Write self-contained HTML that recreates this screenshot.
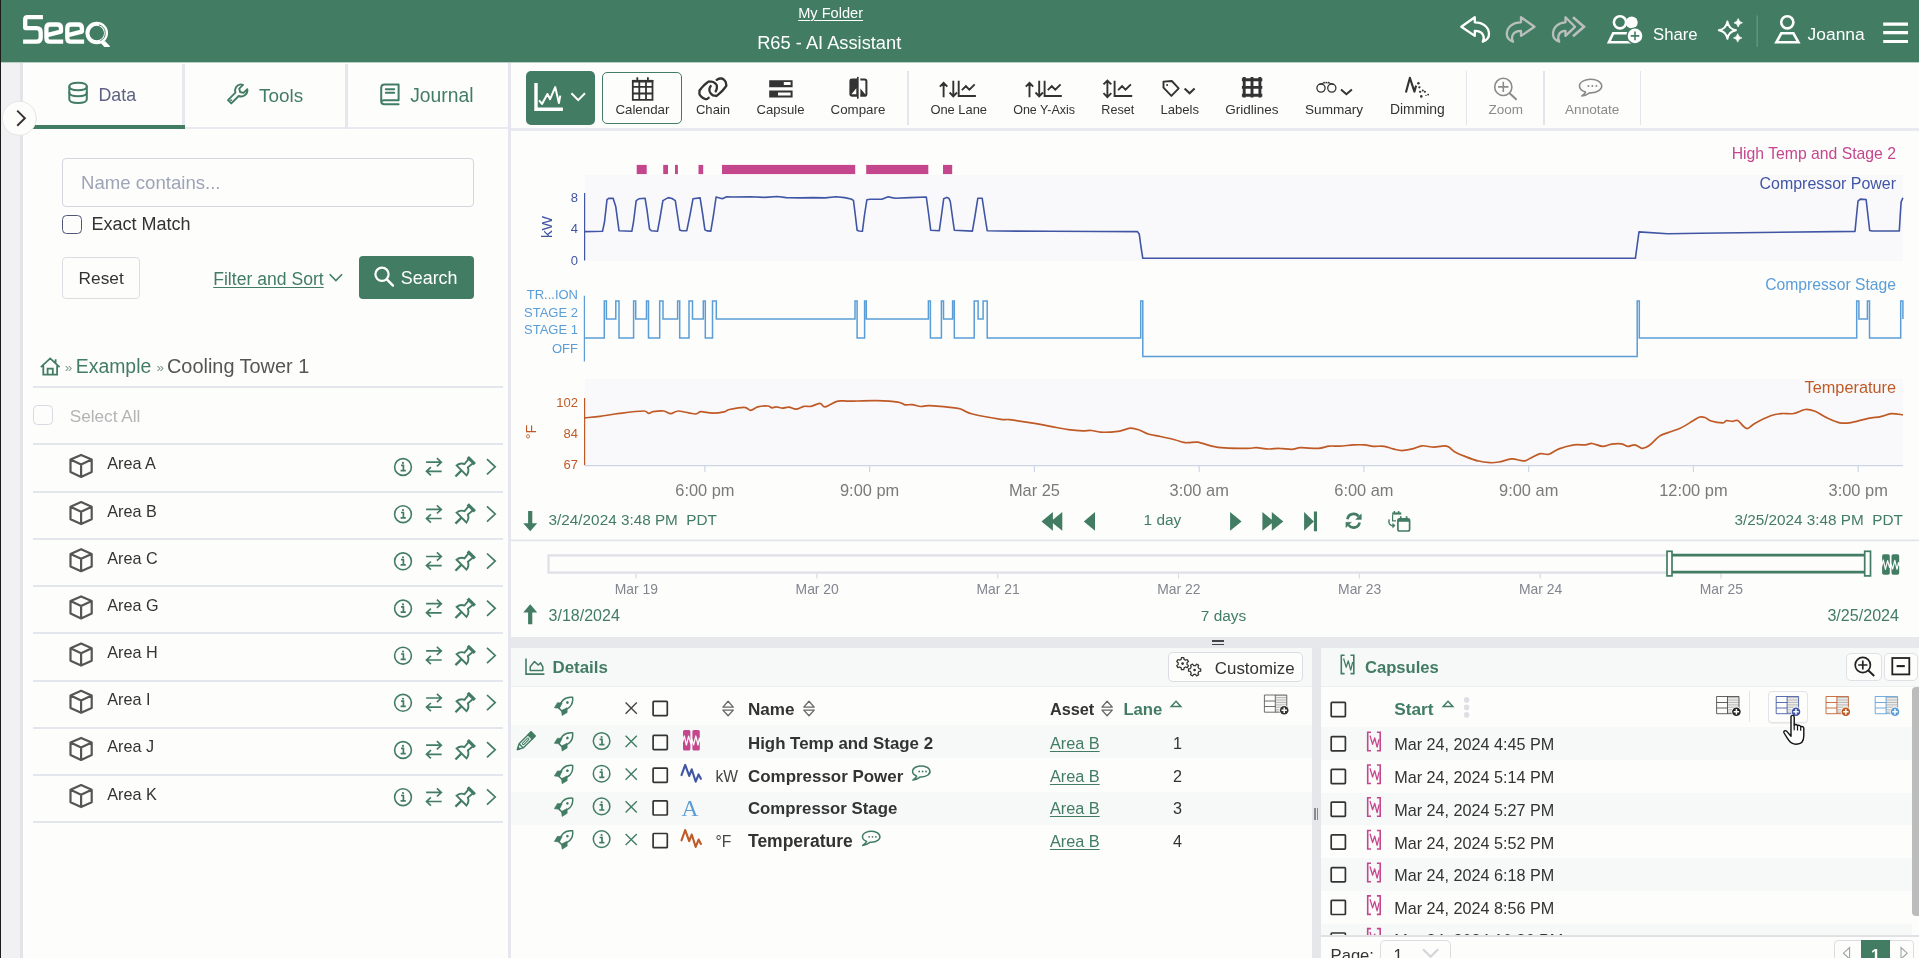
<!DOCTYPE html>
<html><head><meta charset="utf-8"><title>Seeq</title>
<style>
*{box-sizing:border-box;margin:0;padding:0}
html,body{width:1919px;height:958px;overflow:hidden;background:#fdfdfc;font-family:"Liberation Sans",sans-serif;color:#333}
.a{position:absolute}
.t{position:absolute;white-space:nowrap;line-height:1}
.g{color:#427c63}
svg{position:absolute;overflow:visible}
#root{position:absolute;left:0;top:0;width:1919px;height:958px;overflow:hidden;will-change:transform}
</style></head><body><div id="root">
<!-- HEADER -->
<div class="a" style="left:0;top:0;width:1919px;height:62px;background:#427d63"></div>
<div class="a" style="left:0;top:0;width:1px;height:958px;background:#1c1c1c"></div>
<svg style="left:0;top:0" width="1919" height="62" viewBox="0 0 1919 62" fill="none" stroke="#fff" stroke-linejoin="round">
 <!-- logo -->
 <g stroke-width="4.3" stroke-linecap="butt" stroke-linejoin="round">
  <path d="M42.9,17.2 H27.5 Q25.2,17.2 25.2,19.5 V28.1 H36.5 Q40.7,28.1 40.7,32.3 V37.5 Q40.7,41.7 36.5,41.7 H23.1"/>
  <path d="M63.2,41.7 H50 Q46.4,41.7 46.4,38 V28.2 Q46.4,24.5 50,24.5 H57.4 Q61,24.5 61,28.2 V31.6 L47,35.2"/>
  <path d="M84.1,41.7 H70.9 Q67.3,41.7 67.3,38 V28.2 Q67.3,24.5 70.9,24.5 H78.3 Q81.9,24.5 81.9,28.2 V31.6 L67.9,35.2"/>
  <circle cx="96.75" cy="33.05" r="9.3" stroke-width="4"/>
 </g>
 <path d="M100.7,42.9 L105,40.9 L109.8,46.1 V46.9 H104.4 Z" fill="#fff" stroke="none"/>
 <path d="M98.9,24.9 A8.4,8.4 0 0 1 100.3,40.7" stroke="#427d63" stroke-width=".9" fill="none"/>
 <!-- undo -->
 <path d="M1461.3,26.8 L1474.8,17.2 V22.3 C1483,22.3 1489,27 1489,34 C1489,38 1486,40.6 1482.8,41.6 C1484.6,38.5 1484.6,31 1474.8,30.9 V35.9 Z" stroke-width="2.3"/>
 <!-- redo (dim) -->
 <g stroke="#b9bfbc" stroke-width="2.3">
 <path d="M1534.5,26.8 L1521,17.2 V22.3 C1512.8,22.3 1506.8,27 1506.8,34 C1506.8,38 1509.8,40.6 1513,41.6 C1511.2,38.5 1511.2,31 1521,30.9 V35.9 Z"/>
 <path d="M1575,26.8 L1565.5,17.2 V22.3 C1558.8,22.3 1553,27 1553,34 C1553,38 1556,40.6 1559.2,41.6 C1557.4,38.5 1557.4,31 1565.5,30.9 V35.9 Z"/>
 <path d="M1573,17.3 L1584,26.8 L1573,36.3" stroke-width="2.6" stroke-linejoin="miter"/>
 </g>
 <!-- share icon -->
 <circle cx="1631.7" cy="22.4" r="6" fill="#fff" stroke="none"/>
 <circle cx="1620" cy="22.3" r="6.1" stroke-width="2.6" fill="#427d63"/>
 <path d="M1613.2,33.2 H1628 L1632,42.2 H1608.9 Z" stroke-width="2.6" stroke-linejoin="miter"/>
 <circle cx="1635" cy="35.9" r="8.6" fill="#427d63" stroke="none"/>
 <circle cx="1635" cy="35.9" r="7.3" fill="#fff" stroke="none"/>
 <path d="M1635,31.6 V40.2 M1630.7,35.9 H1639.3" stroke="#427d63" stroke-width="1.6"/>
 <!-- sparkles -->
 <path d="M1727.4,21.6 Q1728.6,29 1736,30.2 Q1728.6,31.4 1727.4,38.8 Q1726.2,31.4 1718.8,30.2 Q1726.2,29 1727.4,21.6Z" stroke-width="2"/>
 <path d="M1738.2,18.6 Q1738.8,22.2 1742.4,22.8 Q1738.8,23.4 1738.2,27 Q1737.6,23.4 1734,22.8 Q1737.6,22.2 1738.2,18.6Z M1737.7,33.7 Q1738.3,37.3 1741.9,37.9 Q1738.3,38.5 1737.7,42.1 Q1737.1,38.5 1733.5,37.9 Q1737.1,37.3 1737.7,33.7Z" fill="#fff" stroke="#fff" stroke-width=".8"/>
 <path d="M1757.2,15.5 V46.8" stroke="#6a9a84" stroke-width="1.2"/>
 <!-- user -->
 <circle cx="1787.3" cy="22.3" r="6.1" stroke-width="2.6"/>
 <path d="M1781.3,33.3 H1793.4 L1798.4,42.2 H1776.4 Z" stroke-width="2.6" stroke-linejoin="miter"/>
 <!-- hamburger -->
 <path d="M1883.2,24.1 H1908 M1883.2,32.6 H1908 M1883.2,41.5 H1908" stroke-width="3.2"/>
</svg>
<div class="t" style="top:5px;font-size:14.6px;line-height:16px;color:#fff;left:798.2px;text-decoration:underline;text-underline-offset:1.5px;text-decoration-thickness:1.3px">My Folder</div>
<div class="t" style="top:32px;font-size:18.25px;line-height:21px;color:#fff;left:757.2px;">R65 - AI Assistant</div>
<div class="t" style="top:25px;font-size:16.7px;line-height:19px;color:#fff;left:1653.0px;">Share</div>
<div class="t" style="top:24px;font-size:17.4px;line-height:20px;color:#fff;left:1807.6px;">Joanna</div>
<!-- LEFT PANEL -->
<div class="a" style="left:1px;top:62px;width:18.5px;height:896px;background:#f1f1f4"></div>
<div class="a" style="left:19.5px;top:62px;width:3px;height:896px;background:#e2e2e9"></div>
<div class="a" style="left:507.7px;top:62px;width:3.3px;height:896px;background:#e6e7ee"></div>
<div class="a" style="left:22.5px;top:127.3px;width:485.2px;height:2px;background:#e9e9f0"></div>
<div class="a" style="left:182.4px;top:64px;width:2.6px;height:64.5px;background:#e6e7ef"></div>
<div class="a" style="left:345.3px;top:64px;width:2.6px;height:64.5px;background:#e6e7ef"></div>
<div class="a" style="left:22.5px;top:125px;width:162px;height:3.8px;background:#427d63"></div>
<div class="t" style="top:85px;font-size:17.8px;line-height:20px;color:#5d6182;left:98.5px;">Data</div>
<div class="t" style="top:85px;font-size:18.9px;line-height:21px;color:#427d63;left:259.0px;">Tools</div>
<div class="t" style="top:85px;font-size:19.3px;line-height:21px;color:#427d63;left:410.2px;">Journal</div>
<svg style="left:0;top:62px" width="512" height="80" viewBox="0 62 512 80" fill="none" stroke="#427d63" stroke-width="2" stroke-linejoin="round" stroke-linecap="round">
 <path d="M69.3,86.6 C69.3,81.6 86.8,81.6 86.8,86.6 V99.2 C86.8,104.2 69.3,104.2 69.3,99.2 Z"/>
 <path d="M69.3,86.6 C69.3,91.6 86.8,91.6 86.8,86.6 M69.3,92.4 C69.3,97.4 86.8,97.4 86.8,92.4"/>
 <!-- wrench -->
 <path d="M240.6,84.4 a6.3,6.3 0 0 0 -5.2,8.3 L228,100.1 l3.3,3.3 L238.7,96 a6.3,6.3 0 0 0 8.6,-6.9 l-3.8,3.8 l-3.4,-0.9 l-0.9,-3.4 l3.8,-3.8 a6.3,6.3 0 0 0 -2.4,-0.4 Z" stroke-width="1.9"/>
 <circle cx="231" cy="100.2" r=".6" stroke-width="1"/>
 <!-- journal -->
 <path d="M398.6,100.2 V84.4 H384.6 Q381.2,84.4 381.2,87.8 V101.2 Q381.2,104.2 384.4,104.2 H398.6 M398.6,100.2 H384.4 Q381.4,100.2 381.3,102 M385.8,89.3 H394.2 M385.8,92.7 H394.2" stroke-width="2"/>
 <!-- collapse -->
 <circle cx="19.3" cy="118.3" r="17" fill="#fdfdfc" stroke="#e4e4e6" stroke-width="1"/>
 <path d="M17.2,110.6 L24.9,118.2 L17.2,125.7" stroke="#3a2f33" stroke-width="1.9" stroke-linejoin="miter" stroke-linecap="butt"/>
</svg>
<div class="a" style="left:62px;top:158px;width:412px;height:48.5px;border:1px solid #d3d5df;border-radius:4px;background:#fdfdfc"></div>
<div class="t" style="top:172px;font-size:18.6px;line-height:21px;color:#9ea4b8;left:81.0px;">Name contains...</div>
<div class="a" style="left:62px;top:214.5px;width:19.5px;height:19.5px;border:1.5px solid #50567a;border-radius:4.5px;background:#fdfdfc"></div>
<div class="t" style="top:214px;font-size:18px;line-height:20px;color:#333;left:91.5px;">Exact Match</div>
<div class="a" style="left:62px;top:256.5px;width:78px;height:42px;border:1px solid #dcdde3;border-radius:4px;background:#fdfdfc"></div>
<div class="t" style="top:268px;font-size:17.3px;line-height:20px;color:#333;left:78.6px;">Reset</div>
<div class="t" style="top:269px;font-size:17.6px;line-height:20px;color:#427d63;left:213.2px;text-decoration:underline;text-underline-offset:2px">Filter and Sort</div>
<div class="a" style="left:358.8px;top:256.2px;width:115.3px;height:42.8px;background:#427d63;border-radius:4px"></div>
<div class="t" style="top:268px;font-size:17.9px;line-height:20px;color:#fff;left:400.8px;">Search</div>
<svg style="left:0;top:250px" width="512" height="60" viewBox="0 250 512 60" fill="none" stroke-linecap="round">
 <circle cx="382" cy="274.3" r="6.6" stroke="#fff" stroke-width="2.2"/>
 <path d="M386.9,279.3 L393,285.6" stroke="#fff" stroke-width="2.4"/>
 <path d="M329.7,274.3 L335.9,280.6 L342.1,274.3" stroke="#427d63" stroke-width="1.6" stroke-linecap="butt"/>
</svg>
<svg style="left:0;top:350px" width="512" height="40" viewBox="0 350 512 40" fill="none" stroke="#427d63" stroke-width="1.8" stroke-linejoin="miter">
 <path d="M40.8,367.2 L50.2,358.4 L59.6,367.2 M43.3,365.6 V374.6 H57.1 V365.6 M47.6,374.6 V368.6 H52.8 V374.6 M55.6,363 V359.3"/>
</svg>
<div class="t" style="top:360px;font-size:13.5px;line-height:15px;color:#7a9a8b;left:64.8px;">»</div>
<div class="t" style="top:355px;font-size:19.4px;line-height:22px;color:#427d63;left:75.8px;">Example</div>
<div class="t" style="top:360px;font-size:13.5px;line-height:15px;color:#7a9a8b;left:156.6px;">»</div>
<div class="t" style="top:355px;font-size:19.9px;line-height:22px;color:#555;left:167.0px;">Cooling Tower 1</div>
<div class="a" style="left:33px;top:386px;width:470px;height:2px;background:#e4e6ed"></div>
<div class="a" style="left:33.4px;top:405.3px;width:19.4px;height:19.4px;border:1px solid #d6d8e2;border-radius:4.5px;background:#fdfdfc"></div>
<div class="t" style="top:406px;font-size:17.2px;line-height:20px;color:#b4b4b6;left:69.7px;">Select All</div>
<div class="a" style="left:33px;top:443.2px;width:470px;height:2px;background:#e4e6ed"></div>
<svg width="0" height="0" style="position:absolute"><defs>
<g id="cube" fill="none" stroke="#555" stroke-width="2.2" stroke-linejoin="round"><path d="M0,-11 L10.6,-6.3 V6.2 L0,11 L-10.6,6.2 V-6.3 Z M-10.6,-6.3 L0,-1.4 L10.6,-6.3 M0,-1.4 V11"/></g>
<g id="info" fill="none" stroke="#427d63"><circle cx="0" cy="0" r="8.4" stroke-width="1.6"/><path d="M-2,-1.7 H0.4 V3.4 M-2.4,3.6 H2.8" stroke-width="1.7"/><circle cx="0" cy="-4.1" r="1.05" fill="#427d63" stroke="none"/></g>
<g id="swap" fill="none" stroke="#427d63" stroke-width="1.7"><path d="M-7.8,-4.6 H7.4 M3,-8.7 L7.4,-4.6 L3,-0.5 M7.8,4.5 H-7.4 M-3,0.4 L-7.4,4.5 L-3,8.6"/></g>
<g id="pin" fill="none" stroke="#427d63" stroke-width="1.9" stroke-linejoin="miter"><g transform="rotate(45)"><path d="M-5,-10.6 H5" stroke-width="3.2"/><path d="M-3,-10 L-2.4,-3.4 Q-6.6,-1.4 -7,3.2 H7 Q6.6,-1.4 2.4,-3.4 L3,-10"/><path d="M0,3.2 V11.8" stroke-width="2.3"/></g></g>
<g id="chev" fill="none" stroke="#427d63" stroke-width="1.7"><path d="M-4.1,-7.6 L4.1,0 L-4.1,7.6"/></g>
</defs></svg>
<svg style="left:0;top:440px" width="512" height="400" viewBox="0 440 512 400">
<use href="#cube" x="81.1" y="465.9"/><use href="#info" x="403" y="467.0"/><use href="#swap" x="433.9" y="466.8"/><use href="#pin" x="463.8" y="468.1"/><use href="#chev" x="491.1" y="466.8"/>
<use href="#cube" x="81.1" y="513.1"/><use href="#info" x="403" y="514.2"/><use href="#swap" x="433.9" y="514.0"/><use href="#pin" x="463.8" y="515.3"/><use href="#chev" x="491.1" y="514.0"/>
<use href="#cube" x="81.1" y="560.2"/><use href="#info" x="403" y="561.3"/><use href="#swap" x="433.9" y="561.1"/><use href="#pin" x="463.8" y="562.4"/><use href="#chev" x="491.1" y="561.1"/>
<use href="#cube" x="81.1" y="607.4"/><use href="#info" x="403" y="608.5"/><use href="#swap" x="433.9" y="608.3"/><use href="#pin" x="463.8" y="609.6"/><use href="#chev" x="491.1" y="608.3"/>
<use href="#cube" x="81.1" y="654.6"/><use href="#info" x="403" y="655.7"/><use href="#swap" x="433.9" y="655.5"/><use href="#pin" x="463.8" y="656.8"/><use href="#chev" x="491.1" y="655.5"/>
<use href="#cube" x="81.1" y="701.8"/><use href="#info" x="403" y="702.8"/><use href="#swap" x="433.9" y="702.6"/><use href="#pin" x="463.8" y="703.9"/><use href="#chev" x="491.1" y="702.6"/>
<use href="#cube" x="81.1" y="748.9"/><use href="#info" x="403" y="750.0"/><use href="#swap" x="433.9" y="749.8"/><use href="#pin" x="463.8" y="751.1"/><use href="#chev" x="491.1" y="749.8"/>
<use href="#cube" x="81.1" y="796.1"/><use href="#info" x="403" y="797.2"/><use href="#swap" x="433.9" y="797.0"/><use href="#pin" x="463.8" y="798.3"/><use href="#chev" x="491.1" y="797.0"/>
</svg>
<div class="t" style="top:454px;font-size:16.2px;line-height:18px;color:#333;left:107.3px;">Area A</div>
<div class="a" style="left:33px;top:490.9px;width:470px;height:2px;background:#e4e6ed"></div>
<div class="t" style="top:502px;font-size:16.2px;line-height:18px;color:#333;left:107.3px;">Area B</div>
<div class="a" style="left:33px;top:538.0px;width:470px;height:2px;background:#e4e6ed"></div>
<div class="t" style="top:549px;font-size:16.2px;line-height:18px;color:#333;left:107.3px;">Area C</div>
<div class="a" style="left:33px;top:585.2px;width:470px;height:2px;background:#e4e6ed"></div>
<div class="t" style="top:596px;font-size:16.2px;line-height:18px;color:#333;left:107.3px;">Area G</div>
<div class="a" style="left:33px;top:632.4px;width:470px;height:2px;background:#e4e6ed"></div>
<div class="t" style="top:643px;font-size:16.2px;line-height:18px;color:#333;left:107.3px;">Area H</div>
<div class="a" style="left:33px;top:679.5px;width:470px;height:2px;background:#e4e6ed"></div>
<div class="t" style="top:690px;font-size:16.2px;line-height:18px;color:#333;left:107.3px;">Area I</div>
<div class="a" style="left:33px;top:726.7px;width:470px;height:2px;background:#e4e6ed"></div>
<div class="t" style="top:737px;font-size:16.2px;line-height:18px;color:#333;left:107.3px;">Area J</div>
<div class="a" style="left:33px;top:773.9px;width:470px;height:2px;background:#e4e6ed"></div>
<div class="t" style="top:785px;font-size:16.2px;line-height:18px;color:#333;left:107.3px;">Area K</div>
<div class="a" style="left:33px;top:821.1px;width:470px;height:2px;background:#e4e6ed"></div>
<!-- TOOLBAR -->
<div class="a" style="left:511px;top:128.2px;width:1408px;height:2.8px;background:#e9eaf0"></div>
<div class="a" style="left:526px;top:71px;width:69px;height:53.8px;background:#427d63;border-radius:5px"></div>
<div class="a" style="left:602px;top:72px;width:80.3px;height:51.8px;border:1.3px solid #427d63;border-radius:5px;background:#fdfdfc"></div>
<div class="a" style="left:907.0999999999999px;top:71px;width:1.5px;height:54px;background:#e4e5ed"></div>
<div class="a" style="left:1465.8px;top:71px;width:1.5px;height:54px;background:#e4e5ed"></div>
<div class="a" style="left:1543.3px;top:71px;width:1.5px;height:54px;background:#e4e5ed"></div>
<div class="a" style="left:1639.8999999999999px;top:71px;width:1.5px;height:54px;background:#e4e5ed"></div>
<div class="t" style="top:102px;font-size:13.3px;line-height:15px;color:#333;left:615.4px;">Calendar</div>
<div class="t" style="top:102px;font-size:13.1px;line-height:15px;color:#333;left:695.9px;">Chain</div>
<div class="t" style="top:102px;font-size:13.1px;line-height:15px;color:#333;left:756.5px;">Capsule</div>
<div class="t" style="top:102px;font-size:13.3px;line-height:15px;color:#333;left:830.6px;">Compare</div>
<div class="t" style="top:102px;font-size:12.9px;line-height:15px;color:#333;left:930.4px;">One Lane</div>
<div class="t" style="top:103px;font-size:12.5px;line-height:14px;color:#333;left:1013.2px;">One Y-Axis</div>
<div class="t" style="top:103px;font-size:12.6px;line-height:14px;color:#333;left:1101.3px;">Reset</div>
<div class="t" style="top:102px;font-size:13.1px;line-height:15px;color:#333;left:1160.4px;">Labels</div>
<div class="t" style="top:102px;font-size:13.5px;line-height:15px;color:#333;left:1225.2px;">Gridlines</div>
<div class="t" style="top:102px;font-size:13.6px;line-height:15px;color:#333;left:1305.0px;">Summary</div>
<div class="t" style="top:101px;font-size:13.9px;line-height:16px;color:#333;left:1390.0px;">Dimming</div>
<div class="t" style="top:102px;font-size:13.5px;line-height:15px;color:#8b8b8b;left:1488.4px;">Zoom</div>
<div class="t" style="top:102px;font-size:13.6px;line-height:15px;color:#8b8b8b;left:1565.0px;">Annotate</div>
<svg style="left:0;top:62px" width="1919" height="70" viewBox="0 62 1919 70" fill="none" stroke="#333" stroke-width="1.9">
 <!-- chart btn -->
 <path d="M536,82.9 V109.2 H562.9" stroke="#fff" stroke-width="3.4"/>
 <path d="M539.1,100.3 L542,103.9 L547.4,94 L550.1,99.2 L555.2,87.1 L558.9,103 L560.3,95.6" stroke="#fff" stroke-width="2" stroke-linejoin="round"/>
 <path d="M571.4,93.3 L578.2,100.1 L585,93.3" stroke="#fff" stroke-width="2"/>
 <!-- calendar -->
 <path d="M632.8,81 H652.5 V99.9 H632.8 Z M632.8,86.9 H652.5 M632.8,93.5 H652.5 M639.3,81 V99.9 M646,81 V99.9 M637.3,77.3 V81 M647.9,77.3 V81" stroke-width="1.8"/>
 <path d="M632,81.2 H653.3" stroke-width="2.6"/>
 <!-- chain -->
 <path d="M708.7,97.7 C707.6,98.2 708.1,99.6 705.4,99.1 C702.7,98.6 702.7,98.5 700.7,96.1 C698.7,93.7 699.4,94.5 699.5,92.0 C699.6,89.5 698.6,91.7 701.0,88.7 C703.4,85.7 703.5,85.3 706.7,83.0 C709.9,80.7 707.9,81.6 710.7,81.7 C713.5,81.8 713.0,81.6 715.1,83.4 C717.2,85.2 716.7,84.3 716.9,87.0 C717.1,89.7 716.1,89.9 715.7,91.4" stroke-width="2.3" stroke-linecap="round"/>
 <path d="M716.7,79.9 C717.9,79.4 717.9,78.5 720.4,78.5 C722.9,78.5 722.2,78.2 724.1,80.0 C726.0,81.8 725.9,81.3 726.1,84.0 C726.3,86.7 727.3,84.5 724.7,88.0 C722.1,91.5 721.6,91.8 718.4,94.4 C715.2,97.0 717.4,95.8 715.1,95.7 C712.8,95.6 713.3,96.0 711.4,94.1 C709.5,92.2 709.6,92.7 709.4,90.0 C709.2,87.3 710.3,87.3 710.7,86.0" stroke-width="2.3" stroke-linecap="round"/>
 <!-- capsule -->
 <path d="M769.2,80.3 H792.6 V87.2 H769.2 Z M783.8,82.1 V85 H790.6 V82.1 Z M769.2,90.6 H792.6 V97.5 H769.2 Z M778,92.6 V95.6 H790.6 V92.6 Z" fill="#333" fill-rule="evenodd" stroke="none"/>
 <!-- compare -->
 <path d="M857.3,78.6 H851.8 Q849.4,78.6 849.4,81 V94.3 Q849.4,96.7 851.8,96.7 H857.3 Z" fill="#333" stroke="none"/>
 <path d="M851.4,94.3 L856.3,88.2 V94.3 Z" fill="#fdfdfc" stroke="none"/>
 <path d="M857.8,76.9 V98.7" stroke-width="1.7"/>
 <path d="M860.3,79.6 H864.6 Q866.4,79.6 866.4,81.4 V93.9 Q866.4,95.7 864.6,95.7 H860.3" stroke-width="2"/>
 <path d="M860.4,88.5 L866,95.3 H860.4 Z" fill="#333" stroke="none"/>
 <g transform="translate(0,0)"><path d="M943.6,97.2 V82.8 M939.9,86.7 L943.6,82.8 L947.3,86.7 M953.3,80.7 V96.2 M949.6,92.5 L953.3,96.3 L957,92.5 M958.7,80.7 V96 H975.9 M961.9,90.2 L965.9,86.2 L969.4,89.6 L974.7,84.4"/></g><g transform="translate(85.9,0)"><path d="M943.6,97.2 V82.8 M939.9,86.7 L943.6,82.8 L947.3,86.7 M953.3,80.7 V96.2 M949.6,92.5 L953.3,96.3 L957,92.5 M958.7,80.7 V96 H975.9 M961.9,90.2 L965.9,86.2 L969.4,89.6 L974.7,84.4"/></g>
 <!-- reset -->
 <path d="M1107.4,80.6 V97 M1103.5,84.4 L1107.4,80.5 L1111.3,84.4 M1103.5,93.2 L1107.4,97.1 L1111.3,93.2 M1114.6,80.7 V96 H1132.2 M1118.1,90.2 L1122.1,86.2 L1125.5,89.6 L1130.9,84.4"/>
 <!-- labels -->
 <path d="M1163.5,81.6 L1171.8,81 L1178.7,88.4 L1171.4,95.9 L1163.5,87.7 Z" stroke-linejoin="round"/>
 <circle cx="1167.1" cy="84.9" r="1" fill="#333" stroke="none"/>
 <path d="M1184.6,88.5 L1189.6,93.3 L1194.6,88.5" stroke-width="2"/>
 <!-- gridlines -->
 <path d="M1244.2,77.1 V97.5 M1252,77.1 V97.5 M1259.9,77.1 V97.5 M1241.9,79.8 H1262.3 M1241.9,87.4 H1262.3 M1241.9,95.2 H1262.3" stroke-width="2.9"/>
 <!-- summary -->
 <circle cx="1321" cy="88.1" r="4.1" stroke-width="1.3"/><circle cx="1331.8" cy="88.1" r="4.1" stroke-width="1.3"/>
 <path d="M1319.5,84.2 Q1326.4,81.2 1333.3,84.2 M1322.5,83.6 L1324.5,82 M1326.4,83.3 V81.7 M1330.3,83.6 L1328.3,82" stroke-width="1.1"/>
 <path d="M1341,89.5 L1346.4,94.2 L1351.9,89.5" stroke-width="2"/>
 <!-- dimming -->
 <path d="M1405.9,92.5 L1409.9,77.8 L1414.4,91.6 L1416.1,85.6" stroke-width="2.1" stroke-linejoin="round"/>
 <g fill="#333" stroke="none"><circle cx="1418.4" cy="83.2" r="1.25"/><circle cx="1419.4" cy="87.3" r="1.15"/><circle cx="1420.1" cy="91.8" r="1.15"/><circle cx="1422.8" cy="90.4" r="1"/><circle cx="1424.9" cy="91.8" r="1.05"/><circle cx="1421.3" cy="96.4" r="1.3"/><circle cx="1428.2" cy="94.6" r=".95"/><circle cx="1426" cy="95.4" r=".7"/></g>
 <!-- zoom -->
 <g stroke="#8b8b8b"><circle cx="1503.3" cy="86.9" r="8.6" stroke-width="1.6"/><path d="M1498.1,86.9 H1508.5 M1503.3,81.7 V92.1" stroke-width="1.6"/><path d="M1509.6,93.2 L1516.6,99.7" stroke-width="2"/></g>
 <!-- annotate -->
 <g stroke="#8b8b8b" stroke-width="1.6"><path d="M1585.6,92.1 A11.1,6.8 0 1 1 1589.6,92.8 Q1586.2,95.4 1581.8,95.9 Q1584.6,94.2 1585.6,92.1 Z" stroke-linejoin="round"/></g>
 <g fill="#8b8b8b" stroke="none"><circle cx="1588.4" cy="86.1" r="1"/><circle cx="1592.4" cy="86.1" r="1"/><circle cx="1596.4" cy="86.1" r="1"/></g>
</svg>
<!-- CHART -->
<div class="a" style="left:585.3px;top:174.8px;width:1317.7px;height:86.4px;background:#f9f9fb"></div>
<div class="a" style="left:585.3px;top:378.8px;width:1317.7px;height:86.4px;background:#f9f9fb"></div>
<svg style="left:0;top:130px" width="1919" height="520" viewBox="0 130 1919 520" fill="none">
<rect x="636.7" y="164.9" width="10.0" height="9.2" fill="#c4478e"/><rect x="663.2" y="164.9" width="4.8" height="9.2" fill="#c4478e"/><rect x="675" y="164.9" width="2.9" height="9.2" fill="#c4478e"/><rect x="698.5" y="164.9" width="4.7" height="9.2" fill="#c4478e"/><rect x="722" y="164.9" width="133.2" height="9.2" fill="#c4478e"/><rect x="866.2" y="164.9" width="62.1" height="9.2" fill="#c4478e"/><rect x="943" y="164.9" width="9.2" height="9.2" fill="#c4478e"/>
<path d="M585,465.6 H1903 M704.9,465.6 V472 M869.6,465.6 V472 M1034.4,465.6 V472 M1199.2,465.6 V472 M1363.9,465.6 V472 M1528.7,465.6 V472 M1693.4,465.6 V472 M1858.2,465.6 V472" stroke="#cdd6e8" stroke-width="1.2"/>
<path d="M584.6,193 V260.6" stroke="#4055a3" stroke-width="1.2"/><path d="M584.4,295.8 V361.6" stroke="#5b9dd7" stroke-width="1.2"/><path d="M584.6,398 V465.2" stroke="#bf5a26" stroke-width="1.2"/>
<path d="M584.8,231.6 L602.5,231.3 L604.5,222.0 L607.0,199.7 L608.7,198.4 L613.2,198.4 L615.8,206.8 L619.0,230.7 L631.8,231.3 L633.5,222.0 L636.2,200.6 L638.9,198.8 L645.1,198.3 L647.0,210.0 L649.5,229.0 L651.3,230.7 L657.5,231.3 L660.0,218.0 L662.9,200.6 L668.2,197.6 L672.0,198.5 L675.3,200.6 L677.5,215.0 L679.7,229.9 L682.0,230.7 L686.8,230.7 L690.0,215.0 L693.0,198.8 L700.1,197.9 L702.5,213.0 L704.9,229.9 L707.0,230.9 L710.8,231.1 L713.5,215.0 L716.1,197.0 L718.0,197.6 L722.3,198.8 L726.7,196.7 L733.0,197.0 L750.7,196.7 L764.9,197.4 L777.3,196.5 L786.2,197.6 L800.4,197.9 L812.8,197.6 L825.2,197.9 L835.9,196.7 L844.8,197.6 L851.9,199.3 L853.5,200.6 L855.3,215.0 L857.1,230.2 L859.0,231.0 L862.4,231.3 L864.5,215.0 L866.9,199.7 L870.0,199.3 L881.9,199.3 L885.0,198.0 L888.2,196.7 L892.0,197.6 L895.3,198.3 L910.0,197.6 L926.3,197.0 L928.5,213.0 L930.7,230.2 L939.3,230.7 L941.5,215.0 L943.7,198.8 L946.7,197.4 L948.8,198.2 L950.3,201.5 L952.3,216.0 L954.3,230.2 L972.4,231.1 L975.0,216.0 L977.8,198.3 L982.2,198.3 L984.7,215.0 L987.2,230.7 L1000.0,231.0 L1050.0,231.3 L1100.0,231.5 L1137.5,231.6 L1139.3,234.3 L1141.0,247.0 L1142.8,258.3 L1635.4,258.3 L1637.2,245.0 L1639.0,231.9 L1667.7,233.7 L1700.0,233.3 L1760.0,232.5 L1855.0,231.4 L1856.5,216.0 L1858.0,201.2 L1860.3,199.1 L1866.1,199.5 L1867.9,215.0 L1869.7,230.5 L1872.0,231.0 L1899.3,231.0 L1900.2,216.0 L1901.1,202.1 L1902.9,197.7" stroke="#4055a3" stroke-width="1.6" stroke-linejoin="round"/>
<path d="M584.8,338 H604.3 V300.9 H606.4 V319 H615.8 V300.9 H619 V338 H633.6 V300.9 H635.7 V319 H646.5 V300.9 H648.5 V338 H659.7 V300.9 H663 V319 H677.6 V300.9 H679.7 V338 H689 V300.9 H692.5 V319 H703.3 V300.9 H705.3 V338 H712.5 V300.9 H716.3 V319 H855 V300.9 H857.1 V338 H864.6 V300.9 H866.3 V319 H928.4 V300.9 H930.4 V338 H941.4 V300.9 H943.5 V319 H952.6 V300.9 H954.3 V338 H974.2 V300.9 H978.1 V319 H983.1 V300.9 H987.2 V338 H1140.7 V300.9 H1142.8 V356.4 H1637.2 V300.9 H1639.3 V338 H1856.7 V300.9 H1858.9 V319 H1867.4 V300.9 H1869.5 V338 H1900.7 V300.9 H1902.9 V319" stroke="#5b9dd7" stroke-width="1.5" stroke-linejoin="miter"/>
<path d="M584.8,417.9 C587.3,417.6 594.1,417.1 599.9,416.3 C605.7,415.6 612.2,414.3 619.4,413.4 C626.6,412.5 638.4,411.0 643.3,411.0 C648.2,411.0 647.1,413.3 648.7,413.4 C650.3,413.5 650.6,412.1 653.1,411.7 C655.6,411.3 660.8,410.7 663.7,411.0 C666.7,411.3 668.3,413.6 670.8,413.6 C673.3,413.6 674.8,410.9 678.8,411.0 C682.8,411.1 691.1,413.9 694.8,414.0 C698.5,414.1 698.0,411.8 701.0,411.7 C704.0,411.6 708.6,413.1 712.5,413.1 C716.4,413.1 721.3,412.5 724.1,411.9 C726.9,411.3 726.0,410.2 729.4,409.5 C732.8,408.8 741.0,407.2 744.5,407.4 C748.0,407.5 748.5,410.5 750.7,410.4 C752.9,410.3 755.0,407.6 757.8,406.9 C760.6,406.2 765.2,405.9 767.6,406.0 C770.0,406.1 770.5,407.7 772.0,407.8 C773.5,407.9 774.6,406.8 776.4,406.9 C778.2,406.9 780.5,408.1 782.6,408.1 C784.7,408.1 786.7,406.9 788.9,407.1 C791.1,407.3 793.5,409.3 796.0,409.2 C798.5,409.1 801.4,406.9 803.9,406.4 C806.4,405.9 808.3,406.9 811.0,406.4 C813.7,405.9 817.5,403.2 819.9,403.3 C822.3,403.4 822.2,407.2 825.2,406.9 C828.2,406.5 833.6,402.1 837.7,401.2 C841.8,400.2 843.5,401.3 850.0,401.2 C856.5,401.1 868.6,400.5 876.6,400.7 C884.6,400.9 893.2,401.4 897.9,402.1 C902.6,402.8 902.6,404.4 905.0,404.8 C907.4,405.2 909.4,404.3 912.1,404.6 C914.8,404.9 918.0,406.3 921.0,406.5 C924.0,406.7 924.0,405.3 929.9,405.6 C935.8,405.9 950.9,407.3 956.5,408.1 C962.1,408.9 961.0,409.4 963.6,410.4 C966.2,411.4 966.2,412.5 972.4,414.0 C978.6,415.5 994.6,418.4 1000.8,419.3 C1007.0,420.2 1004.1,419.0 1009.7,419.7 C1015.3,420.4 1027.8,422.3 1034.6,423.4 C1041.4,424.5 1044.9,425.4 1050.5,426.4 C1056.1,427.4 1063.0,428.9 1068.3,429.6 C1073.6,430.3 1078.7,430.7 1082.5,430.8 C1086.3,430.9 1088.3,430.3 1091.3,430.5 C1094.2,430.7 1096.9,431.8 1100.2,432.1 C1103.5,432.4 1107.7,432.2 1110.9,432.1 C1114.2,432.0 1116.5,431.9 1119.7,431.2 C1123.0,430.5 1127.1,428.4 1130.4,428.2 C1133.7,428.0 1136.3,429.0 1139.3,430.0 C1142.2,431.0 1144.6,432.9 1148.1,434.0 C1151.6,435.1 1156.1,435.6 1160.5,436.5 C1164.9,437.4 1170.9,438.7 1174.7,439.7 C1178.5,440.7 1181.2,441.9 1183.6,442.4 C1186.0,442.9 1186.6,442.7 1188.9,442.7 C1191.2,442.7 1193.9,441.6 1197.7,442.2 C1201.5,442.8 1207.5,445.2 1211.9,446.1 C1216.4,447.1 1218.5,447.5 1224.4,447.9 C1230.3,448.3 1242.1,448.4 1247.4,448.4 C1252.7,448.4 1252.8,447.6 1256.3,447.7 C1259.8,447.8 1264.8,448.9 1268.7,449.0 C1272.6,449.1 1275.6,448.3 1279.4,448.4 C1283.2,448.4 1288.2,449.4 1291.8,449.3 C1295.3,449.2 1296.3,447.9 1300.7,447.7 C1305.1,447.5 1313.7,448.7 1318.4,448.4 C1323.1,448.1 1325.5,446.5 1329.1,446.1 C1332.6,445.7 1335.6,446.3 1339.7,446.1 C1343.8,445.9 1349.8,445.1 1353.9,444.9 C1358.1,444.7 1361.3,444.7 1364.6,444.9 C1367.8,445.1 1370.2,446.1 1373.4,446.3 C1376.7,446.5 1380.8,445.9 1384.1,446.3 C1387.4,446.7 1390.0,448.1 1393.0,448.8 C1396.0,449.5 1398.5,450.6 1401.8,450.6 C1405.0,450.6 1409.1,449.6 1412.5,448.8 C1415.9,448.0 1418.7,446.1 1422.2,445.8 C1425.8,445.5 1430.1,447.2 1433.8,447.2 C1437.5,447.2 1441.9,445.8 1444.4,445.8 C1446.9,445.8 1447.0,446.0 1448.8,447.0 C1450.6,448.0 1452.3,450.4 1455.0,452.0 C1457.7,453.6 1461.2,454.9 1465.0,456.4 C1468.8,457.9 1473.4,459.8 1477.6,460.8 C1481.8,461.9 1486.5,462.5 1490.1,462.7 C1493.6,462.9 1495.4,462.6 1498.9,462.0 C1502.5,461.4 1507.9,459.2 1511.4,458.9 C1515.0,458.6 1517.9,460.1 1520.2,460.4 C1522.5,460.7 1523.3,461.2 1525.2,460.8 C1527.1,460.4 1528.9,458.9 1531.4,457.7 C1533.9,456.5 1537.3,454.3 1540.2,453.7 C1543.1,453.1 1545.9,455.0 1549.0,454.2 C1552.1,453.4 1554.8,450.4 1559.0,448.9 C1563.2,447.3 1569.6,445.6 1574.0,444.9 C1578.4,444.2 1582.3,445.1 1585.3,444.9 C1588.3,444.7 1589.3,443.2 1592.2,443.5 C1595.1,443.8 1599.6,446.3 1602.8,446.4 C1606.0,446.5 1608.5,444.5 1611.6,444.1 C1614.7,443.7 1618.9,443.5 1621.6,443.9 C1624.3,444.3 1625.7,446.2 1627.9,446.4 C1630.1,446.5 1632.4,444.5 1634.8,444.8 C1637.2,445.1 1639.9,448.2 1642.3,448.3 C1644.7,448.4 1646.4,447.5 1649.2,445.5 C1652.0,443.5 1656.1,438.5 1659.2,436.4 C1662.3,434.2 1664.5,434.0 1668.0,432.6 C1671.5,431.2 1676.1,430.1 1680.2,428.2 C1684.3,426.3 1689.3,423.0 1692.6,421.1 C1695.8,419.2 1697.6,417.6 1699.7,417.0 C1701.8,416.4 1703.2,416.9 1705.0,417.5 C1706.8,418.1 1707.3,419.8 1710.3,420.7 C1713.2,421.6 1720.0,422.9 1722.7,422.9 C1725.4,422.9 1724.7,420.9 1726.3,420.7 C1727.9,420.4 1730.6,421.4 1732.5,421.4 C1734.4,421.4 1735.4,419.4 1737.8,420.6 C1740.2,421.8 1743.9,428.0 1746.7,428.5 C1749.5,429.0 1750.7,425.5 1754.7,423.4 C1758.7,421.3 1766.3,417.4 1770.7,415.8 C1775.1,414.2 1777.5,414.0 1781.3,413.6 C1785.1,413.2 1789.7,414.2 1793.7,413.5 C1797.7,412.8 1801.8,409.9 1805.3,409.5 C1808.8,409.1 1811.3,409.9 1815.0,411.3 C1818.7,412.7 1823.2,416.2 1827.4,418.1 C1831.6,420.0 1835.8,422.2 1839.9,422.9 C1844.1,423.6 1847.6,423.1 1852.3,422.3 C1857.0,421.6 1863.6,419.3 1868.3,418.4 C1873.0,417.4 1876.9,417.4 1880.7,416.6 C1884.5,415.8 1887.6,413.9 1891.3,413.6 C1895.0,413.3 1901.0,414.7 1902.9,414.9" stroke="#bf5a26" stroke-width="1.7" stroke-linejoin="round"/>
<g fill="#427d63" stroke="none">
 <path d="M530.2,511.3 V524.2 M530.2,530.3" />
 <path d="M1041.5,521.5 L1052.9,512.1 V530.8 Z M1050.8,521.5 L1062.3,512.1 V530.8 Z M1083.8,521.5 L1095,512.1 V530.8 Z M1241.6,521.5 L1230.1,512.1 V530.8 Z M1273.9,521.5 L1262.4,512.1 V530.8 Z M1283.3,521.5 L1271.8,512.1 V530.8 Z M1313.9,521.5 L1304.1,512.1 V530.8 Z M1313.9,511.5 H1317 V531.3 H1313.9 Z"/>
</g>
<g stroke="#427d63" fill="none">
 <path d="M528.1,511 H532.3 V523.3 H537.2 L530.2,531.3 L523.2,523.3 H528.1 Z" fill="#427d63" stroke="none"/>
 <path d="M528.1,624.3 H532.3 V612.6 H537.2 L530.2,604.2 L523.2,612.6 H528.1 Z" fill="#427d63" stroke="none"/>
 <!-- refresh -->
 <path d="M1347.4,519.2 A6.2,6.2 0 0 1 1358.6,516.6 M1359.6,522.4 A6.2,6.2 0 0 1 1348.5,525" stroke-width="2.6"/>
 <path d="M1361.3,514 V519.4 H1355.7 Z M1345.9,527.6 V522.3 H1351.4 Z" fill="#427d63" stroke="#427d63" stroke-width=".5" stroke-linejoin="round"/>
 <!-- cal copy -->
 <path d="M1392.2,513.5 H1401.2" stroke-width="2.2"/><path d="M1394.4,511 V513 M1398.6,511 V513" stroke-width="1.5"/>
 <path d="M1392.6,514.5 V520.8 H1396" stroke-width="1.2"/>
 <path d="M1389.2,519.4 C1388,523.5 1390,525.7 1393.4,525.7" stroke-width="1.5"/><path d="M1392.7,523.5 L1395.2,525.6 L1392.7,527.8 Z" fill="#427d63" stroke="#427d63" stroke-width=".6"/>
 <rect x="1397.9" y="518.8" width="11.7" height="12.2" rx="1.7" stroke-width="1.7"/>
 <path d="M1397.9,520.4 H1409.6" stroke-width="2.8"/><path d="M1400.7,516.3 V519 M1406.6,516.3 V519" stroke-width="1.7"/>
</g>
<path d="M511,540.4 H1919" stroke="#e4e5ea" stroke-width="1.6"/>
<path d="M548.5,555.3 H1667 M548.5,572.6 H1667 M548.5,554.2 V573.7" stroke="#dfe0e7" stroke-width="2.2"/>
<path d="M636.0,573.6 V578.5 M816.8,573.6 V578.5 M997.7,573.6 V578.5 M1178.5,573.6 V578.5 M1359.3,573.6 V578.5 M1540.2,573.6 V578.5 M1721.0,573.6 V578.5" stroke="#d9dbe6" stroke-width="1.2"/>
<path d="M1672,555.1 H1864.5 M1672,572.1 H1864.5" stroke="#427d63" stroke-width="2.6"/>
<rect x="1667" y="551.3" width="5" height="24.6" fill="#fdfdfc" stroke="#427d63" stroke-width="1.7"/><rect x="1864.7" y="551.3" width="5.8" height="24.6" fill="#fdfdfc" stroke="#427d63" stroke-width="1.7"/>
<rect x="1882.1" y="554.2" width="7.7" height="20.6" rx="1.8" fill="#427d63"/><rect x="1891.5" y="554.2" width="7.7" height="20.6" rx="1.8" fill="#427d63"/><path d="M1881.6,566.5 L1883.3,560 L1885.4,569.3 L1887.6,560.6 L1889.6,567.5 L1890.7,563.2 L1892.6,569 L1894.8,560.3 L1897,569.3 L1898.6,562.5 L1899.7,566" stroke="#fdfdfc" stroke-width="1.2" stroke-linejoin="round"/>
</svg>
<div class="t" style="top:190px;font-size:13px;line-height:15px;color:#4055a3;right:1341.0px;">8</div>
<div class="t" style="top:221px;font-size:13px;line-height:15px;color:#4055a3;right:1341.0px;">4</div>
<div class="t" style="top:253px;font-size:13px;line-height:15px;color:#4055a3;right:1341.0px;">0</div>
<div class="t" style="top:287px;font-size:13px;line-height:15px;color:#5b9dd7;right:1341.0px;">TR...ION</div>
<div class="t" style="top:305px;font-size:13px;line-height:15px;color:#5b9dd7;right:1341.0px;">STAGE 2</div>
<div class="t" style="top:322px;font-size:13px;line-height:15px;color:#5b9dd7;right:1341.0px;">STAGE 1</div>
<div class="t" style="top:341px;font-size:13px;line-height:15px;color:#5b9dd7;right:1341.0px;">OFF</div>
<div class="t" style="top:395px;font-size:13px;line-height:15px;color:#bf5a26;right:1341.0px;">102</div>
<div class="t" style="top:426px;font-size:13px;line-height:15px;color:#bf5a26;right:1341.0px;">84</div>
<div class="t" style="top:457px;font-size:13px;line-height:15px;color:#bf5a26;right:1341.0px;">67</div>
<div class="t" style="left:547.4px;top:226.8px;font-size:15.3px;color:#4055a3;transform:translate(-50%,-50%) rotate(-90deg)">kW</div>
<div class="t" style="left:530.6px;top:432.2px;font-size:14.5px;color:#bf5a26;transform:translate(-50%,-50%) rotate(-90deg)">°F</div>
<div class="t" style="top:145px;font-size:15.75px;line-height:17px;color:#c4478e;right:23.0px;">High Temp and Stage 2</div>
<div class="t" style="top:175px;font-size:15.95px;line-height:17px;color:#4055a3;right:23.0px;">Compressor Power</div>
<div class="t" style="top:276px;font-size:15.7px;line-height:17px;color:#5b9dd7;right:23.0px;">Compressor Stage</div>
<div class="t" style="top:378px;font-size:16.3px;line-height:18px;color:#bf5a26;right:23.0px;">Temperature</div>
<div class="t" style="top:481px;font-size:16.4px;line-height:18px;color:#7a7a7a;left:704.9px;transform:translateX(-50%);">6:00 pm</div>
<div class="t" style="top:481px;font-size:16.4px;line-height:18px;color:#7a7a7a;left:869.6px;transform:translateX(-50%);">9:00 pm</div>
<div class="t" style="top:481px;font-size:16.4px;line-height:18px;color:#7a7a7a;left:1034.4px;transform:translateX(-50%);">Mar 25</div>
<div class="t" style="top:481px;font-size:16.4px;line-height:18px;color:#7a7a7a;left:1199.2px;transform:translateX(-50%);">3:00 am</div>
<div class="t" style="top:481px;font-size:16.4px;line-height:18px;color:#7a7a7a;left:1363.9px;transform:translateX(-50%);">6:00 am</div>
<div class="t" style="top:481px;font-size:16.4px;line-height:18px;color:#7a7a7a;left:1528.7px;transform:translateX(-50%);">9:00 am</div>
<div class="t" style="top:481px;font-size:16.4px;line-height:18px;color:#7a7a7a;left:1693.4px;transform:translateX(-50%);">12:00 pm</div>
<div class="t" style="top:481px;font-size:16.4px;line-height:18px;color:#7a7a7a;left:1858.2px;transform:translateX(-50%);">3:00 pm</div>
<div class="t" style="top:511px;font-size:15.3px;line-height:17px;color:#427d63;left:548.6px;white-space:pre">3/24/2024 3:48 PM  PDT</div>
<div class="t" style="top:511px;font-size:15.4px;line-height:17px;color:#427d63;left:1143.6px;">1 day</div>
<div class="t" style="top:511px;font-size:15.3px;line-height:17px;color:#427d63;right:16.2px;white-space:pre">3/25/2024 3:48 PM  PDT</div>
<div class="t" style="top:581px;font-size:13.9px;line-height:16px;color:#83868f;left:636.4px;transform:translateX(-50%);">Mar 19</div>
<div class="t" style="top:581px;font-size:13.9px;line-height:16px;color:#83868f;left:817.2px;transform:translateX(-50%);">Mar 20</div>
<div class="t" style="top:581px;font-size:13.9px;line-height:16px;color:#83868f;left:998.1px;transform:translateX(-50%);">Mar 21</div>
<div class="t" style="top:581px;font-size:13.9px;line-height:16px;color:#83868f;left:1178.9px;transform:translateX(-50%);">Mar 22</div>
<div class="t" style="top:581px;font-size:13.9px;line-height:16px;color:#83868f;left:1359.7px;transform:translateX(-50%);">Mar 23</div>
<div class="t" style="top:581px;font-size:13.9px;line-height:16px;color:#83868f;left:1540.6px;transform:translateX(-50%);">Mar 24</div>
<div class="t" style="top:581px;font-size:13.9px;line-height:16px;color:#83868f;left:1721.4px;transform:translateX(-50%);">Mar 25</div>
<div class="t" style="top:607px;font-size:16px;line-height:17px;color:#427d63;left:548.6px;">3/18/2024</div>
<div class="t" style="top:607px;font-size:15.4px;line-height:17px;color:#427d63;left:1223.5px;transform:translateX(-50%);">7 days</div>
<div class="t" style="top:606px;font-size:16.1px;line-height:18px;color:#427d63;right:20.0px;">3/25/2024</div>
<!-- DETAILS -->
<svg width="0" height="0" style="position:absolute"><defs>
<g id="rocket"><g transform="rotate(45)"><path d="M0,-9.4 C-3,-7 -4.8,-4 -4.8,-0.5 C-4.8,3 -3.5,6 -2.2,8 H2.2 C3.5,6 4.8,3 4.8,-0.5 C4.8,-4 3,-7 0,-9.4Z" fill="#fdfdfc" stroke="#427d63" stroke-width="1.5" stroke-linejoin="round"/><path d="M-3.4,2 L-6.9,5.2 L-5.5,11 L-1.5,7.8 Z M3.4,2 L6.9,5.2 L5.5,11 L1.5,7.8 Z" fill="#427d63" stroke="#427d63" stroke-width=".6" stroke-linejoin="round"/><circle cx="0" cy="-2" r="1.35" fill="#427d63"/></g></g>
<g id="xg" fill="none" stroke="#427d63" stroke-width="1.4"><path d="M-5.6,-5.6 L5.6,5.6 M5.6,-5.6 L-5.6,5.6"/></g>
<g id="xd" fill="none" stroke="#444" stroke-width="1.4"><path d="M-5.6,-5.6 L5.6,5.6 M5.6,-5.6 L-5.6,5.6"/></g>
<g id="cb"><rect x="-7.1" y="-7.1" width="14.2" height="14.2" rx=".8" fill="#fdfdfc" stroke="#333" stroke-width="1.7"/></g>
<g id="info2" fill="none" stroke="#427d63"><circle cx="0" cy="0" r="8.3" stroke-width="1.5"/><path d="M-2,-1.6 H0.4 V3.4 M-2.4,3.6 H2.8" stroke-width="1.7"/><circle cx="0" cy="-4" r="1.05" fill="#427d63" stroke="none"/></g>
<g id="sorti" fill="none" stroke="#666" stroke-width="1.3" stroke-linejoin="round"><path d="M0,-7.2 L5.2,-1.4 H-5.2 Z M0,7.2 L5.2,1.6 H-5.2 Z"/></g>
<g id="caretup" fill="none" stroke="#427d63" stroke-width="1.5" stroke-linejoin="miter"><path d="M0,-2.7 L4.8,2.4 H-4.8 Z"/></g>
<g id="comment" fill="none" stroke="#427d63" stroke-width="1.5"><path d="M-5.9,4.6 A8.7,5.5 0 1 1 -2.2,5.4 Q-5.4,8 -9.8,8.6 Q-7,6.8 -5.9,4.6 Z" stroke-linejoin="round"/><circle cx="-3.4" cy="0" r=".9" fill="#427d63" stroke="none"/><circle cx="0" cy="0" r=".9" fill="#427d63" stroke="none"/><circle cx="3.4" cy="0" r=".9" fill="#427d63" stroke="none"/></g>
<pattern id="hatch" width="22" height="1.7" patternUnits="userSpaceOnUse"><path d="M0,.5 H22" stroke="#8a8a8a" stroke-width=".6"/></pattern>
</defs></svg>
<div class="a" style="left:511px;top:637px;width:1408px;height:10.9px;background:#e7e8eb"></div>
<div class="a" style="left:1212.1px;top:640px;width:11.9px;height:1.8px;background:#444"></div>
<div class="a" style="left:1212.1px;top:643.6px;width:11.9px;height:1.8px;background:#444"></div>
<div class="a" style="left:511px;top:647.6px;width:800.6px;height:38.6px;background:#f7f8f8"></div>
<div class="a" style="left:511px;top:685.6px;width:800.6px;height:1.4px;background:#eeeff1"></div>
<div class="a" style="left:511px;top:724.8px;width:800.6px;height:33.6px;background:#f7f8f8"></div>
<div class="a" style="left:511px;top:791.9px;width:800.6px;height:32.8px;background:#f7f8f8"></div>
<div class="a" style="left:1311.6px;top:647.6px;width:9.6px;height:311px;background:#e6e7eb"></div>
<div class="a" style="left:1314.2px;top:807.5px;width:1.4px;height:12.6px;background:#8a8a8a"></div>
<div class="a" style="left:1317px;top:807.5px;width:1.4px;height:12.6px;background:#8a8a8a"></div>
<div class="t" style="top:658px;font-size:16.9px;line-height:19px;color:#427d63;font-weight:bold;left:552.5px;">Details</div>
<div class="a" style="left:1167.6px;top:652.4px;width:135.8px;height:29.4px;border:1px solid #dcdde2;border-radius:5px;background:#fdfdfc"></div>
<div class="t" style="top:659px;font-size:16.9px;line-height:19px;color:#333;left:1214.8px;">Customize</div>
<div class="t" style="top:700px;font-size:17.1px;line-height:19px;color:#333;font-weight:bold;left:748.0px;">Name</div>
<div class="t" style="top:700px;font-size:16.3px;line-height:18px;color:#333;font-weight:bold;left:1049.9px;">Asset</div>
<div class="t" style="top:700px;font-size:16.7px;line-height:19px;color:#427d63;font-weight:bold;left:1123.4px;">Lane</div>
<div class="t" style="top:734px;font-size:16.85px;line-height:19px;color:#333;font-weight:bold;left:748.0px;">High Temp and Stage 2</div>
<div class="t" style="top:734px;font-size:16.3px;line-height:18px;color:#427d63;left:1049.9px;text-decoration:underline;text-underline-offset:2px">Area B</div>
<div class="t" style="top:734px;font-size:16.2px;line-height:18px;color:#333;left:1177.5px;transform:translateX(-50%);">1</div>
<div class="t" style="top:767px;font-size:16.95px;line-height:19px;color:#333;font-weight:bold;left:748.0px;">Compressor Power</div>
<div class="t" style="top:767px;font-size:16.3px;line-height:18px;color:#427d63;left:1049.9px;text-decoration:underline;text-underline-offset:2px">Area B</div>
<div class="t" style="top:767px;font-size:16.2px;line-height:18px;color:#333;left:1177.5px;transform:translateX(-50%);">2</div>
<div class="t" style="top:799px;font-size:16.8px;line-height:19px;color:#333;font-weight:bold;left:748.0px;">Compressor Stage</div>
<div class="t" style="top:799px;font-size:16.3px;line-height:18px;color:#427d63;left:1049.9px;text-decoration:underline;text-underline-offset:2px">Area B</div>
<div class="t" style="top:799px;font-size:16.2px;line-height:18px;color:#333;left:1177.5px;transform:translateX(-50%);">3</div>
<div class="t" style="top:831px;font-size:17.5px;line-height:20px;color:#333;font-weight:bold;left:748.0px;">Temperature</div>
<div class="t" style="top:832px;font-size:16.3px;line-height:18px;color:#427d63;left:1049.9px;text-decoration:underline;text-underline-offset:2px">Area B</div>
<div class="t" style="top:832px;font-size:16.2px;line-height:18px;color:#333;left:1177.5px;transform:translateX(-50%);">4</div>
<div class="t" style="top:768px;font-size:15.6px;line-height:17px;color:#444;left:715.5px;">kW</div>
<div class="t" style="top:833px;font-size:15.6px;line-height:17px;color:#444;left:715.5px;">°F</div>
<div class="t" style="left:681.5px;top:797px;font-family:'Liberation Serif',serif;font-size:23.5px;line-height:23px;color:#5b9dd7">A</div>
<svg style="left:0;top:640px" width="1919" height="318" viewBox="0 640 1919 318">
<path d="M526,658.6 V674.1 H544.4" fill="none" stroke="#427d63" stroke-width="1.6"/><path d="M530.2,670.6 V666.8 L534.5,661.6 L538.3,665 L540.6,662.9 L542.8,666.8 V670.6 Z" fill="none" stroke="#427d63" stroke-width="1.5" stroke-linejoin="round"/>
<path d="M1187.02,664.46 L1188.46,665.62 L1187.28,667.67 L1185.55,667.00 L1184.07,667.85 L1183.78,669.69 L1181.42,669.69 L1181.13,667.85 L1179.65,667.00 L1177.92,667.67 L1176.74,665.62 L1178.18,664.46 L1178.18,662.74 L1176.74,661.58 L1177.92,659.53 L1179.65,660.20 L1181.13,659.35 L1181.42,657.51 L1183.78,657.51 L1184.07,659.35 L1185.55,660.20 L1187.28,659.53 L1188.46,661.58 L1187.02,662.74 Z" fill="none" stroke="#333" stroke-width="1.25" stroke-linejoin="round"/><circle cx="1182.6" cy="663.6" r="1.35" fill="#333"/><path d="M1198.85,668.53 L1200.69,668.82 L1200.69,671.18 L1198.85,671.47 L1198.00,672.95 L1198.67,674.68 L1196.62,675.86 L1195.46,674.42 L1193.74,674.42 L1192.58,675.86 L1190.53,674.68 L1191.20,672.95 L1190.35,671.47 L1188.51,671.18 L1188.51,668.82 L1190.35,668.53 L1191.20,667.05 L1190.53,665.32 L1192.58,664.14 L1193.74,665.58 L1195.46,665.58 L1196.62,664.14 L1198.67,665.32 L1198.00,667.05 Z" fill="none" stroke="#333" stroke-width="1.25" stroke-linejoin="round"/><circle cx="1194.6" cy="670" r="1.35" fill="#333"/>
<use href="#rocket" x="566" y="703.9"/><use href="#xd" x="631.2" y="708.2"/><use href="#cb" x="660.2" y="708.5"/><use href="#sorti" x="728.1" y="708.5"/><use href="#sorti" x="809" y="708.5"/><use href="#sorti" x="1107.1" y="708.5"/><use href="#caretup" x="1176" y="704"/>
<g><rect x="1275.3000000000002" y="695" width="11.5" height="17.2" fill="url(#hatch)"/><path d="M1264.4,695 H1286.8000000000002 V712.2 H1264.4 Z M1275.3000000000002,695 V712.2 M1264.4,701 H1275.3000000000002 M1264.4,706.5 H1275.3000000000002" fill="none" stroke="#555" stroke-width=".85"/><circle cx="1284.2" cy="710.2" r="5" fill="#fdfdfc"/><circle cx="1284.2" cy="710.2" r="4.3" fill="#333"/><path d="M1281.5,710.2 H1286.9 M1284.2,707.5 V712.9" stroke="#fdfdfc" stroke-width="1.5"/></g>
<use href="#rocket" x="566" y="739.4"/><use href="#info2" x="601.6" y="741.0"/><use href="#xg" x="631.2" y="741.4"/><use href="#cb" x="660.2" y="742.5"/>
<use href="#rocket" x="566" y="772.1"/><use href="#info2" x="601.6" y="773.7"/><use href="#xg" x="631.2" y="774.1"/><use href="#cb" x="660.2" y="775.2"/>
<use href="#rocket" x="566" y="804.8"/><use href="#info2" x="601.6" y="806.4"/><use href="#xg" x="631.2" y="806.8"/><use href="#cb" x="660.2" y="807.9"/>
<use href="#rocket" x="566" y="837.5"/><use href="#info2" x="601.6" y="839.1"/><use href="#xg" x="631.2" y="839.5"/><use href="#cb" x="660.2" y="840.6"/>
<g transform="translate(525.4,741.6) rotate(45)" fill="none" stroke="#427d63" stroke-width="1.4" stroke-linejoin="round"><path d="M-2.9,-10.6 H2.9 V6 L0,11.2 L-2.9,6 Z M-2.9,6 H2.9"/><path d="M-2.9,-11 H2.9 V-6.6 H-2.9Z" fill="#427d63"/><rect x="-0.9" y="-4.6" width="1.8" height="8.4" rx=".9" stroke-width="1"/><path d="M-1.2,9.2 L0,11.3 L1.2,9.2Z" fill="#427d63"/></g>
<rect x="683" y="730" width="7.4" height="20.6" rx="1.6" fill="#c4478e"/><rect x="692.4" y="730" width="7.4" height="20.6" rx="1.6" fill="#c4478e"/><path d="M682.6,742.2 L684.3,735.8 L686.4,745 L688.6,736.2 L690.6,743.2 L691.7,739 L693.6,744.8 L695.8,736 L698,745 L699.4,738.2 L700.4,741.6" fill="none" stroke="#fdfdfc" stroke-width="1.25" stroke-linejoin="round"/>
<path d="M681.5,775.1 L685.2,764.9 L689.2,775.9 L691.7,769.3 L695.7,781.7 L698.6,774.4 L700.9,778.8" fill="none" stroke="#4055a3" stroke-width="2.1" stroke-linejoin="round" stroke-linecap="round"/><path d="M681.5,840.3 L685.2,830.1 L689.2,841.1 L691.7,834.5 L695.7,846.9 L698.6,839.6 L700.9,844.0" fill="none" stroke="#bf5a26" stroke-width="2.1" stroke-linejoin="round" stroke-linecap="round"/>
<use href="#comment" x="922.6" y="771.5"/><use href="#comment" x="872.5" y="836.8"/>
</svg>
<!-- CAPSULES -->
<div class="a" style="left:1321.2px;top:647.6px;width:598px;height:38.6px;background:#f7f8f8"></div>
<div class="a" style="left:1321.2px;top:685.6px;width:598px;height:1.4px;background:#eeeff1"></div>
<div class="a" style="left:1321.2px;top:726.8px;width:590.6px;height:32.85px;background:#f7f8f8"></div>
<div class="a" style="left:1321.2px;top:792.5px;width:590.6px;height:32.85px;background:#f7f8f8"></div>
<div class="a" style="left:1321.2px;top:858.2px;width:590.6px;height:32.85px;background:#f7f8f8"></div>
<div class="a" style="left:1321.2px;top:923.9px;width:590.6px;height:32.85px;background:#f7f8f8"></div>
<div class="t" style="top:658px;font-size:16.6px;line-height:19px;color:#427d63;font-weight:bold;left:1365.0px;">Capsules</div>
<div class="t" style="top:699px;font-size:17.3px;line-height:20px;color:#427d63;font-weight:bold;left:1394.2px;">Start</div>
<div class="t" style="top:735px;font-size:16.2px;line-height:18px;color:#333;left:1394.2px;">Mar 24, 2024 4:45 PM</div>
<div class="t" style="top:768px;font-size:16.2px;line-height:18px;color:#333;left:1394.2px;">Mar 24, 2024 5:14 PM</div>
<div class="t" style="top:801px;font-size:16.2px;line-height:18px;color:#333;left:1394.2px;">Mar 24, 2024 5:27 PM</div>
<div class="t" style="top:834px;font-size:16.2px;line-height:18px;color:#333;left:1394.2px;">Mar 24, 2024 5:52 PM</div>
<div class="t" style="top:866px;font-size:16.2px;line-height:18px;color:#333;left:1394.2px;">Mar 24, 2024 6:18 PM</div>
<div class="t" style="top:899px;font-size:16.2px;line-height:18px;color:#333;left:1394.2px;">Mar 24, 2024 8:56 PM</div>
<div class="t" style="top:931px;font-size:16.2px;line-height:18px;color:#333;left:1394.2px;">Mar 24, 2024 10:36 PM</div>
<div class="a" style="left:1846.4px;top:652.6px;width:36px;height:28.2px;border:1px solid #e0e1e6;border-radius:5px;background:#fdfdfc"></div>
<div class="a" style="left:1884px;top:652.6px;width:34px;height:28.2px;border:1px solid #e0e1e6;border-radius:5px;background:#fdfdfc"></div>
<div class="a" style="left:1768.3px;top:690.5px;width:39.7px;height:32.7px;border:1px solid #e3e4e9;border-radius:4px;background:#fdfdfc;box-shadow:0 1px 1px rgba(0,0,0,.06)"></div>
<div class="a" style="left:1749px;top:691px;width:1.3px;height:31px;background:#e4e5ea"></div>
<svg style="left:0;top:640px" width="1919" height="318" viewBox="0 640 1919 318">
<path d="M1344.6,655.2 H1341.3 V673.6 H1344.6 M1350.5,655.2 H1353.8 V673.6 H1350.5" fill="none" stroke="#427d63" stroke-width="1.6"/><path d="M1343.6,658.5 L1346.2,667.2 L1348.3,660.8 L1350.7,670.1 L1352.7,662.0" fill="none" stroke="#427d63" stroke-width="1.25" stroke-linejoin="round"/><use href="#cb" x="1338.3" y="709.5"/><use href="#caretup" x="1448" y="704"/><g fill="#dfe0e5"><circle cx="1466.6" cy="699.9" r="2.8"/><circle cx="1466.6" cy="707.4" r="2.8"/><circle cx="1466.6" cy="714.9" r="2.8"/></g>
<use href="#cb" x="1338.3" y="743.8"/><path d="M1371.0,732.3 H1367.7 V750.8 H1371.0 M1376.9,732.3 H1380.2 V750.8 H1376.9" fill="none" stroke="#c4478e" stroke-width="1.6"/><path d="M1370.0,735.6 L1372.6,744.3 L1374.7,737.9 L1377.1,747.2 L1379.1,739.1" fill="none" stroke="#c4478e" stroke-width="1.25" stroke-linejoin="round"/>
<use href="#cb" x="1338.3" y="776.5"/><path d="M1371.0,765.0 H1367.7 V783.5 H1371.0 M1376.9,765.0 H1380.2 V783.5 H1376.9" fill="none" stroke="#c4478e" stroke-width="1.6"/><path d="M1370.0,768.3 L1372.6,777.0 L1374.7,770.6 L1377.1,779.9 L1379.1,771.8" fill="none" stroke="#c4478e" stroke-width="1.25" stroke-linejoin="round"/>
<use href="#cb" x="1338.3" y="809.2"/><path d="M1371.0,797.7 H1367.7 V816.2 H1371.0 M1376.9,797.7 H1380.2 V816.2 H1376.9" fill="none" stroke="#c4478e" stroke-width="1.6"/><path d="M1370.0,801.0 L1372.6,809.7 L1374.7,803.3 L1377.1,812.6 L1379.1,804.5" fill="none" stroke="#c4478e" stroke-width="1.25" stroke-linejoin="round"/>
<use href="#cb" x="1338.3" y="842.0"/><path d="M1371.0,830.5 H1367.7 V849.0 H1371.0 M1376.9,830.5 H1380.2 V849.0 H1376.9" fill="none" stroke="#c4478e" stroke-width="1.6"/><path d="M1370.0,833.8 L1372.6,842.5 L1374.7,836.1 L1377.1,845.4 L1379.1,837.3" fill="none" stroke="#c4478e" stroke-width="1.25" stroke-linejoin="round"/>
<use href="#cb" x="1338.3" y="874.7"/><path d="M1371.0,863.2 H1367.7 V881.7 H1371.0 M1376.9,863.2 H1380.2 V881.7 H1376.9" fill="none" stroke="#c4478e" stroke-width="1.6"/><path d="M1370.0,866.5 L1372.6,875.2 L1374.7,868.8 L1377.1,878.1 L1379.1,870.0" fill="none" stroke="#c4478e" stroke-width="1.25" stroke-linejoin="round"/>
<use href="#cb" x="1338.3" y="907.4"/><path d="M1371.0,895.9 H1367.7 V914.4 H1371.0 M1376.9,895.9 H1380.2 V914.4 H1376.9" fill="none" stroke="#c4478e" stroke-width="1.6"/><path d="M1370.0,899.2 L1372.6,907.9 L1374.7,901.5 L1377.1,910.8 L1379.1,902.7" fill="none" stroke="#c4478e" stroke-width="1.25" stroke-linejoin="round"/>
<use href="#cb" x="1338.3" y="940.1"/><path d="M1371.0,928.6 H1367.7 V947.1 H1371.0 M1376.9,928.6 H1380.2 V947.1 H1376.9" fill="none" stroke="#c4478e" stroke-width="1.6"/><path d="M1370.0,931.9 L1372.6,940.6 L1374.7,934.2 L1377.1,943.5 L1379.1,935.4" fill="none" stroke="#c4478e" stroke-width="1.25" stroke-linejoin="round"/>
<g fill="none" stroke="#222"><circle cx="1862.8" cy="665" r="7.6" stroke-width="1.7"/><path d="M1858.2,665 H1867.4 M1862.8,660.4 V669.6" stroke-width="1.7"/><path d="M1868.4,670.6 L1874.2,676" stroke-width="2"/><rect x="1892.3" y="658" width="17" height="16.4" stroke-width="1.8"/><path d="M1896.6,666.1 H1904.8" stroke-width="2.1"/></g>
<g><rect x="1727.5" y="696.5" width="11.5" height="17.2" fill="url(#hatch)"/><path d="M1716.6,696.5 H1739.0 V713.7 H1716.6 Z M1727.5,696.5 V713.7 M1716.6,702.5 H1727.5 M1716.6,708.0 H1727.5" fill="none" stroke="#444" stroke-width=".85"/><circle cx="1736.3999999999999" cy="711.7" r="5" fill="#fdfdfc"/><circle cx="1736.3999999999999" cy="711.7" r="4.3" fill="#222"/><path d="M1733.6999999999998,711.7 H1739.1 M1736.3999999999999,709.0 V714.4" stroke="#fdfdfc" stroke-width="1.5"/></g><g><rect x="1787.1000000000001" y="696.5" width="11.5" height="17.2" fill="url(#hatch)"/><path d="M1776.2,696.5 H1798.6000000000001 V713.7 H1776.2 Z M1787.1000000000001,696.5 V713.7 M1776.2,702.5 H1787.1000000000001 M1776.2,708.0 H1787.1000000000001" fill="none" stroke="#4055a3" stroke-width=".85"/><circle cx="1796.0" cy="711.7" r="5" fill="#fdfdfc"/><circle cx="1796.0" cy="711.7" r="4.3" fill="#4055a3"/><path d="M1793.3,711.7 H1798.7 M1796.0,709.0 V714.4" stroke="#fdfdfc" stroke-width="1.5"/></g><g><rect x="1836.9" y="696.5" width="11.5" height="17.2" fill="url(#hatch)"/><path d="M1826,696.5 H1848.4 V713.7 H1826 Z M1836.9,696.5 V713.7 M1826,702.5 H1836.9 M1826,708.0 H1836.9" fill="none" stroke="#bf5a26" stroke-width=".85"/><circle cx="1845.8" cy="711.7" r="5" fill="#fdfdfc"/><circle cx="1845.8" cy="711.7" r="4.3" fill="#bf5a26"/><path d="M1843.1,711.7 H1848.5 M1845.8,709.0 V714.4" stroke="#fdfdfc" stroke-width="1.5"/></g><g><rect x="1886.1000000000001" y="696.5" width="11.5" height="17.2" fill="url(#hatch)"/><path d="M1875.2,696.5 H1897.6000000000001 V713.7 H1875.2 Z M1886.1000000000001,696.5 V713.7 M1875.2,702.5 H1886.1000000000001 M1875.2,708.0 H1886.1000000000001" fill="none" stroke="#5b9dd7" stroke-width=".85"/><circle cx="1895.0" cy="711.7" r="5" fill="#fdfdfc"/><circle cx="1895.0" cy="711.7" r="4.3" fill="#5b9dd7"/><path d="M1892.3,711.7 H1897.7 M1895.0,709.0 V714.4" stroke="#fdfdfc" stroke-width="1.5"/></g>
<g transform="translate(1783.2,715.2)" fill="#fff" stroke="#111" stroke-width="1.4" stroke-linejoin="round">
<path d="M7.8,1.7 C7.8,-0.4 11,-0.4 11,1.7 V10.2 C11.6,8.8 14.2,9 14.3,10.8 C15,9.6 17.4,9.9 17.5,11.8 C18.3,10.9 20.5,11.2 20.6,13.2 V20.5 C20.6,26 17.6,29 13,29 C8.5,29 6.6,27 4.4,23.4 L0.9,17.8 C-0.2,15.9 2.2,14.6 3.6,16.2 L7.8,21 Z"/>
<path d="M11,10.4 V15 M14.3,11 V15.2 M17.5,12 V15.6" fill="none" stroke-width="1.2"/></g>
</svg>
<div class="a" style="left:1321.2px;top:935.6px;width:598px;height:22.4px;background:#fdfdfc"></div>
<div class="a" style="left:1321.2px;top:935.4px;width:598px;height:1.3px;background:#e0e1e5"></div>
<div class="t" style="top:946px;font-size:16.6px;line-height:19px;color:#333;left:1330.6px;">Page:</div>
<div class="a" style="left:1379.8px;top:939.9px;width:71.5px;height:30px;border:1px solid #dcdde2;border-radius:5px;background:#fdfdfc"></div>
<div class="t" style="top:946px;font-size:16.6px;line-height:19px;color:#333;left:1393.5px;">1</div>
<div class="a" style="left:1833.6px;top:940.4px;width:80px;height:30px;border:1px solid #dcdde2;border-radius:4px;background:#fdfdfc"></div>
<div class="a" style="left:1861.3px;top:940.4px;width:28.6px;height:30px;background:#427d63"></div>
<div class="t" style="top:946px;font-size:16.6px;line-height:19px;color:#fff;font-weight:bold;left:1875.6px;transform:translateX(-50%);">1</div>
<svg style="left:0;top:936px" width="1919" height="22" viewBox="0 936 1919 22" fill="none"><path d="M1423,949.2 L1430.6,956.8 L1438.2,949.2" stroke="#d4d5d9" stroke-width="2.2"/><path d="M1849.6,947.5 V959 L1843.4,953.2 Z M1901,947.5 V959 L1907.2,953.2 Z" stroke="#9aa6a0" stroke-width="1.1"/></svg>
<div class="a" style="left:1912px;top:686.6px;width:7.5px;height:229.6px;background:#bcbcbc;border-radius:4px 0 0 4px"></div>
<div class="a" style="left:1px;top:62px;width:1918px;height:1px;background:#b9cfc4"></div>
</body></html>
